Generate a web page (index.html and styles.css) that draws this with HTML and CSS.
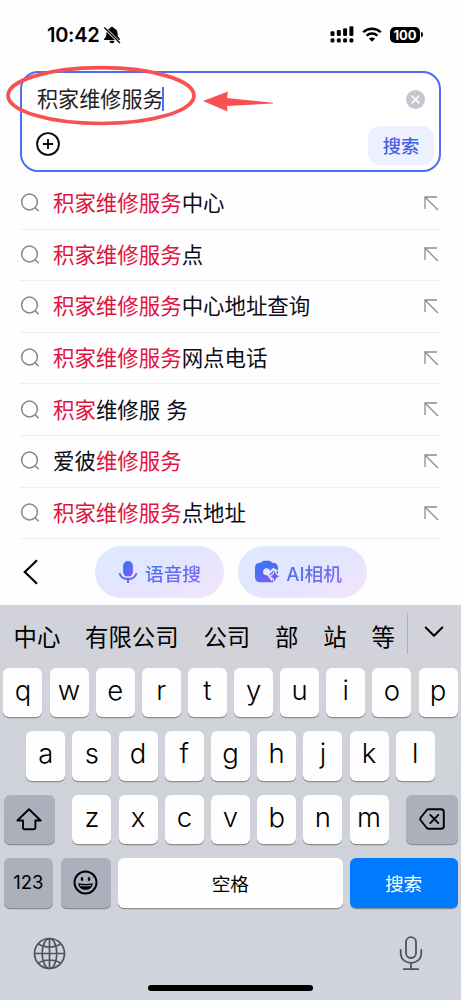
FILE: index.html
```html
<!DOCTYPE html>
<html lang="zh-CN">
<head>
<meta charset="utf-8">
<meta name="viewport" content="width=device-width, initial-scale=1">
<title>积家维修服务</title>
<link rel="stylesheet" href="styles.css">
</head>
<body>
<svg class="defs" aria-hidden="true">
  <defs>
    <linearGradient id="tint" x1="0" y1="0" x2="0.6" y2="1">
      <stop offset="0.3" stop-color="#3f72f4"/><stop offset="1" stop-color="#7b5ef0"/>
    </linearGradient>
    <symbol id="lens" viewBox="0 0 20 20"><circle cx="9.500" cy="9" r="7.900"/><path d="M15.200 14.900 18.700 18.300"/></symbol>
    <symbol id="fill" viewBox="0 0 15 15"><path d="M1 13V1h12M1.200 1.200 14 14"/></symbol>
  </defs>
</svg>
<div class="screen">
  <header class="status">
    <span class="time">10:42</span>
    <svg class="bell" width="18" height="18" viewBox="0 0 18 18">
      <path d="M9 .8a1.900 1.900 0 0 0-1.800 1.500C4.500 3 3.400 5.200 3.400 7.700c0 3.200-1.200 3.900-2.300 5.200v1h15.800v-1c-1.100-1.300-2.300-2-2.300-5.200 0-2.500-1.100-4.700-3.800-5.400A1.900 1.900 0 0 0 9 .8zM6.500 14.800h5a2.500 2.500 0 0 1-5 0z"/>
      <path d="M1.500 1.700 16.900 16.900" stroke="#fff" stroke-width="2.800"/>
      <path d="M1.300 1.500 17 17" stroke="#000" stroke-width="1.300"/>
    </svg>
    <svg class="signal" width="24" height="17" viewBox="0 0 24 17">
      <rect x=".5" y="5.200" width="4" height="4.800" rx="1.200"/><rect x="6.800" y="3.900" width="4" height="6.100" rx="1.200"/><rect x="13.100" y="2.200" width="4" height="7.800" rx="1.200"/><rect x="19.400" y=".2" width="4" height="9.800" rx="1.200"/>
      <rect x=".5" y="12.200" width="4" height="4.200" rx="1.500"/><rect x="6.800" y="12.200" width="4" height="4.200" rx="1.500"/><rect x="13.100" y="12.200" width="4" height="4.200" rx="1.500"/><rect x="19.400" y="12.200" width="4" height="4.200" rx="1.500"/>
    </svg>
    <svg class="wifi" width="20" height="15" viewBox="0 0 20 15" fill="none" stroke="#000">
      <path d="M1.200 5.100C6.200.5 13.800.5 18.800 5.100" stroke-width="2.500"/><path d="M4.500 8.700c3.200-2.900 7.800-2.900 11 0" stroke-width="2.400"/>
      <path d="M10 14.700 6.900 11.600c1.700-1.600 4.500-1.600 6.200 0z" fill="#000" stroke="none"/>
    </svg>
    <span class="battery">100</span><i class="nub"></i>
  </header>

  <section class="box">
    <div class="line">
      <span class="query">积家维修服务</span><i class="caret"></i>
      <svg class="clear" width="19" height="19" viewBox="0 0 19 19"><circle cx="9.500" cy="9.500" r="9.500" fill="#c5c6ce"/><path d="m6.100 6.100 6.800 6.800m0-6.800-6.800 6.800" stroke="#fff" stroke-width="1.500" stroke-linecap="round"/></svg>
    </div>
    <div class="tools">
      <svg class="plus" width="24" height="24" viewBox="0 0 24 24" fill="none" stroke="#0c0c16" stroke-width="1.900"><circle cx="12" cy="12" r="10.900"/><path d="M12 6.900v10.200M6.900 12h10.200"/></svg>
      <button class="go">搜索</button>
    </div>
    <svg class="mark" width="270" height="66" viewBox="0 0 270 66">
      <ellipse cx="95" cy="32.600" rx="93" ry="27.900" fill="none" stroke="#f95151" stroke-width="3.700"/>
      <path d="M197 38 222 28.500 221 35 267 39.700V40.600L221 43 221.500 48.500z" fill="#f95151"/>
    </svg>
  </section>

  <ul class="list">
    <li><svg class="lens"><use href="#lens"/></svg><span><em>积家维修服务</em>中心</span><svg class="fill"><use href="#fill"/></svg></li>
    <li><svg class="lens"><use href="#lens"/></svg><span><em>积家维修服务</em>点</span><svg class="fill"><use href="#fill"/></svg></li>
    <li><svg class="lens"><use href="#lens"/></svg><span><em>积家维修服务</em>中心地址查询</span><svg class="fill"><use href="#fill"/></svg></li>
    <li><svg class="lens"><use href="#lens"/></svg><span><em>积家维修服务</em>网点电话</span><svg class="fill"><use href="#fill"/></svg></li>
    <li><svg class="lens"><use href="#lens"/></svg><span><em>积家</em>维修服 务</span><svg class="fill"><use href="#fill"/></svg></li>
    <li><svg class="lens"><use href="#lens"/></svg><span>爱彼<em>维修服务</em></span><svg class="fill"><use href="#fill"/></svg></li>
    <li><svg class="lens"><use href="#lens"/></svg><span><em>积家维修服务</em>点地址</span><svg class="fill"><use href="#fill"/></svg></li>
  </ul>

  <nav class="actions">
    <svg class="back" width="16" height="26" viewBox="0 0 16 26" fill="none" stroke="#000" stroke-width="2.200"><path d="M14 1.200 1.800 13 14 24.800"/></svg>
    <button class="pill voice">
      <svg width="20" height="24" viewBox="0 0 20 24"><rect x="5.100" y="1" width="9.800" height="15.600" rx="4.900" fill="url(#tint)"/><path d="M1.600 13.200c1.300 7.700 15.500 7.700 16.800 0M10 19v4" fill="none" stroke="url(#tint)" stroke-width="2"/></svg>
      <span>语音搜</span>
    </button>
    <button class="pill camera">
      <svg width="26" height="24" viewBox="0 0 26 24">
        <path d="M7 2.700 8.300 1.300Q9 .7 10 .7h5q1 0 1.700.6L18 2.700h1.500Q24 3.200 24 8v4.500L19 22.300H6.500Q1 22.300 1 17V8q0-4.700 4.500-5.300z" fill="url(#tint)"/>
        <circle cx="12.600" cy="11.700" r="3.500" fill="#e5e6ff"/>
        <path d="M13.500 14 18.200 20.500M15 13.500l4.300-4.500 4.200 2" fill="none" stroke="#e5e6ff" stroke-width="1.900"/>
        <path d="M20.800 10.200c.9 4.300 1.600 5.100 5.200 6-3.600.9-4.300 1.700-5.200 6-.9-4.300-1.600-5.100-5.200-6 3.600-.9 4.300-1.700 5.200-6z" fill="#7060f1" stroke="#e5e6ff" stroke-width="2" paint-order="stroke"/>
      </svg>
      <span>AI相机</span>
    </button>
  </nav>

  <section class="keyboard">
    <div class="words">
      <span>中心</span><span>有限公司</span><span>公司</span><span>部</span><span>站</span><span>等</span>
      <i></i>
      <svg width="20" height="12" viewBox="0 0 20 12" fill="none" stroke="#000" stroke-width="2" stroke-linecap="round" stroke-linejoin="round"><path d="m1.700 1.500 8.300 8.300 8.300-8.300"/></svg>
    </div>
    <div class="row">
      <b>q</b><b>w</b><b>e</b><b>r</b><b>t</b><b>y</b><b>u</b><b>i</b><b>o</b><b>p</b>
    </div>
    <div class="row">
      <b>a</b><b>s</b><b>d</b><b>f</b><b>g</b><b>h</b><b>j</b><b>k</b><b>l</b>
    </div>
    <div class="row third">
      <b class="mod"><svg width="26" height="23" viewBox="0 0 26 23" fill="none" stroke="#000" stroke-width="1.900" stroke-linejoin="round"><path d="M13 1.300 24.600 12.500h-5.200v7.300q0 1.500-1.500 1.500H8.500Q7 21.300 7 19.800v-7.300H1.400z"/></svg></b>
      <div class="mid"><b>z</b><b>x</b><b>c</b><b>v</b><b>b</b><b>n</b><b>m</b></div>
      <b class="mod"><svg width="26" height="22" viewBox="0 0 26 22" fill="none" stroke="#000" stroke-width="1.900" stroke-linejoin="round" stroke-linecap="round"><path d="M9.500 1.200H22q2.800 0 2.800 2.800v14q0 2.800-2.800 2.800H9.500q-1 0-1.700-.8L1.800 12.500Q.7 11 1.800 9.500L7.800 2q.7-.8 1.700-.8zM11.300 6.900l8 8.200m0-8.200-8 8.200"/></svg></b>
    </div>
    <div class="row last">
      <b class="mod num">123</b>
      <b class="mod face"><svg width="25" height="25" viewBox="0 0 25 25"><circle cx="12.500" cy="12.500" r="11" fill="none" stroke="#000" stroke-width="1.900"/><ellipse cx="9" cy="9" rx="1.300" ry="1.900"/><ellipse cx="16" cy="9" rx="1.300" ry="1.900"/><path d="M5.200 13.200q7.300 1.600 14.600 0c-.4 8.800-14.200 8.800-14.600 0z"/><path d="M6.900 14.900q5.600 1 11.200 0l-.4 1q-5.200.8-10.400 0z" fill="#d8dbe2"/></svg></b>
      <b class="space">空格</b>
      <b class="enter">搜索</b>
    </div>
    <div class="system">
      <svg width="33" height="33" viewBox="0 0 33 33" fill="none" stroke="#50535b" stroke-width="1.700"><circle cx="16.500" cy="16.500" r="15"/><ellipse cx="16.500" cy="16.500" rx="7.300" ry="15"/><path d="M16.500 1.500v30M1.500 16.500h30M5 6.700c6.800 4.400 16.200 4.400 23 0M5 26.300c6.800-4.400 16.200-4.400 23 0"/></svg>
      <svg width="24" height="35" viewBox="0 0 24 35" fill="none" stroke="#50535b" stroke-width="1.800" stroke-linecap="round"><rect x="7" y="1.200" width="10" height="20.800" rx="5"/><path d="M1.700 13.800v3.200c0 13.200 20.600 13.200 20.600 0v-3.200M12 27v6M4.800 33.200h14.400"/></svg>
    </div>
    <div class="home"></div>
  </section>
</div>
</body>
</html>
```
FILE: styles.css
```css
* { box-sizing: border-box; }
body { margin: 0; background: #fefefe; }
button { border: 0; padding: 0; font: inherit; }
svg { display: block; flex: none; }
.defs { position: absolute; width: 0; height: 0; }
.screen {
  width: 461px; height: 1000px; overflow: hidden;
  display: flex; flex-direction: column;
  font-family: Inter, "Noto Sans CJK SC", sans-serif; color: #0c0c18;
}

.status { height: 71px; padding: 0 38px 2px 47px; display: flex; align-items: center; color: #000; flex: none; }
.time { font-size: 20px; font-weight: 600; letter-spacing: -.3px; width: 56px; white-space: nowrap; }
.signal { margin-left: auto; }
.wifi { margin-left: 7.500px; }
.battery {
  margin-left: 8.500px; width: 30px; height: 16px; border-radius: 5px; background: #000; color: #fff;
  font-size: 13px; font-weight: 700; line-height: 16px; text-align: center;
}
.nub { width: 2px; height: 5px; margin-left: 1px; background: #000; border-radius: 0 2px 2px 0; }

.box {
  position: relative; flex: none; height: 101px; margin: 0 20px; padding: 13px 5px 6px 15px;
  border: 2px solid #4e6ef2; border-radius: 18px; background: #fff;
}
.line { display: flex; align-items: center; height: 26px; padding-right: 9px; }
.query { font-size: 21.100px; line-height: 26px; color: #222; padding-top: 1px; }
.caret { width: 2px; height: 24px; margin-left: -2px; background: #4e6ef2; }
.clear { margin-left: auto; }
.tools { display: flex; align-items: center; justify-content: space-between; margin-top: 14px; }
.plus { margin: -4px 0 0 -1px; }
.go { width: 66px; height: 39px; padding-bottom: 2px; border-radius: 12px; background: #edf0fe; color: #4661e5; font-size: 18.300px; font-weight: 500; }
.mark { position: absolute; left: -16px; top: -10.500px; }

.list { list-style: none; margin: 5.900px 20px 0; padding: 0; flex: none; }
.list li { height: 51.650px; display: flex; align-items: center; border-bottom: 1px solid #eeeef0; font-size: 21.450px; line-height: 30px; padding-right: 2.500px; }
.list span { flex: 1; margin-left: 13px; white-space: pre; }
.list em { font-style: normal; color: #e01440; }
.lens { width: 20px; height: 20px; fill: none; stroke: #85868f; stroke-width: 1.500; }
.fill { width: 15px; height: 15px; fill: none; stroke: #8b8c94; stroke-width: 1.300; }

.actions { height: 66px; flex: none; padding: 0 0 0 23px; display: flex; align-items: center; }
.pill {
  width: 129px; height: 52px; border-radius: 26px; display: flex; align-items: center; justify-content: center;
  background: linear-gradient(155deg, #dfe9ff 10%, #e3e5ff 50%, #f2e4fd 95%); font-size: 18.700px; font-weight: 500;
}
.pill span { background: linear-gradient(155deg, #4b72ee 20%, #8966ee 100%); -webkit-background-clip: text; background-clip: text; color: transparent; }
.voice { margin-left: 56px; gap: 7px; }
.camera { margin-left: 14px; gap: 6px; padding-right: 9px; }

.keyboard { flex: 1; padding: 0 3.500px; background: linear-gradient(#d2d3da, #d0d2da 50%, #d0d4dd); color: #000; }
.words { height: 62.500px; padding: 2px 14px 0 10px; display: flex; align-items: center; font-size: 23.400px; line-height: 32px; gap: 24.800px; white-space: nowrap; }
.words span { flex: none; }
.words i { flex: none; width: 1px; height: 41px; margin: -8px 0 0 -13px; background: #aeb0b6; }
.words svg { margin: -12px 0 0 -8px; }
.row { display: flex; justify-content: center; gap: 7.200px; height: 49.500px; margin-bottom: 13.900px; }
.row b {
  width: 39px; height: 49.500px; border-radius: 6px; background: #fefefe; box-shadow: 0 1.200px 0 #8c8e94;
  font-size: 27.500px; font-weight: 350; line-height: 45px; text-align: center;
}
.mid { display: flex; gap: 7.200px; }
.third { justify-content: space-between; }
.row .mod { width: 51.500px; background: #abb0bc; display: flex; align-items: center; justify-content: center; }
.row .num { width: 50px; font-size: 18.500px; font-weight: 400; }
.row .face { width: 50.500px; }
.row .space, .row .enter { font-size: 18.700px; line-height: 53px; font-weight: 400; }
.row .space { width: 225px; }
.row .enter { width: 108px; background: #007aff; color: #fff; }
.system { display: flex; justify-content: space-between; align-items: center; padding: 0 34.500px 0 29.500px; height: 35px; margin-top: 28px; }
.home { width: 165px; height: 6px; border-radius: 3px; background: #000; margin: 14.500px auto 0; }
```
